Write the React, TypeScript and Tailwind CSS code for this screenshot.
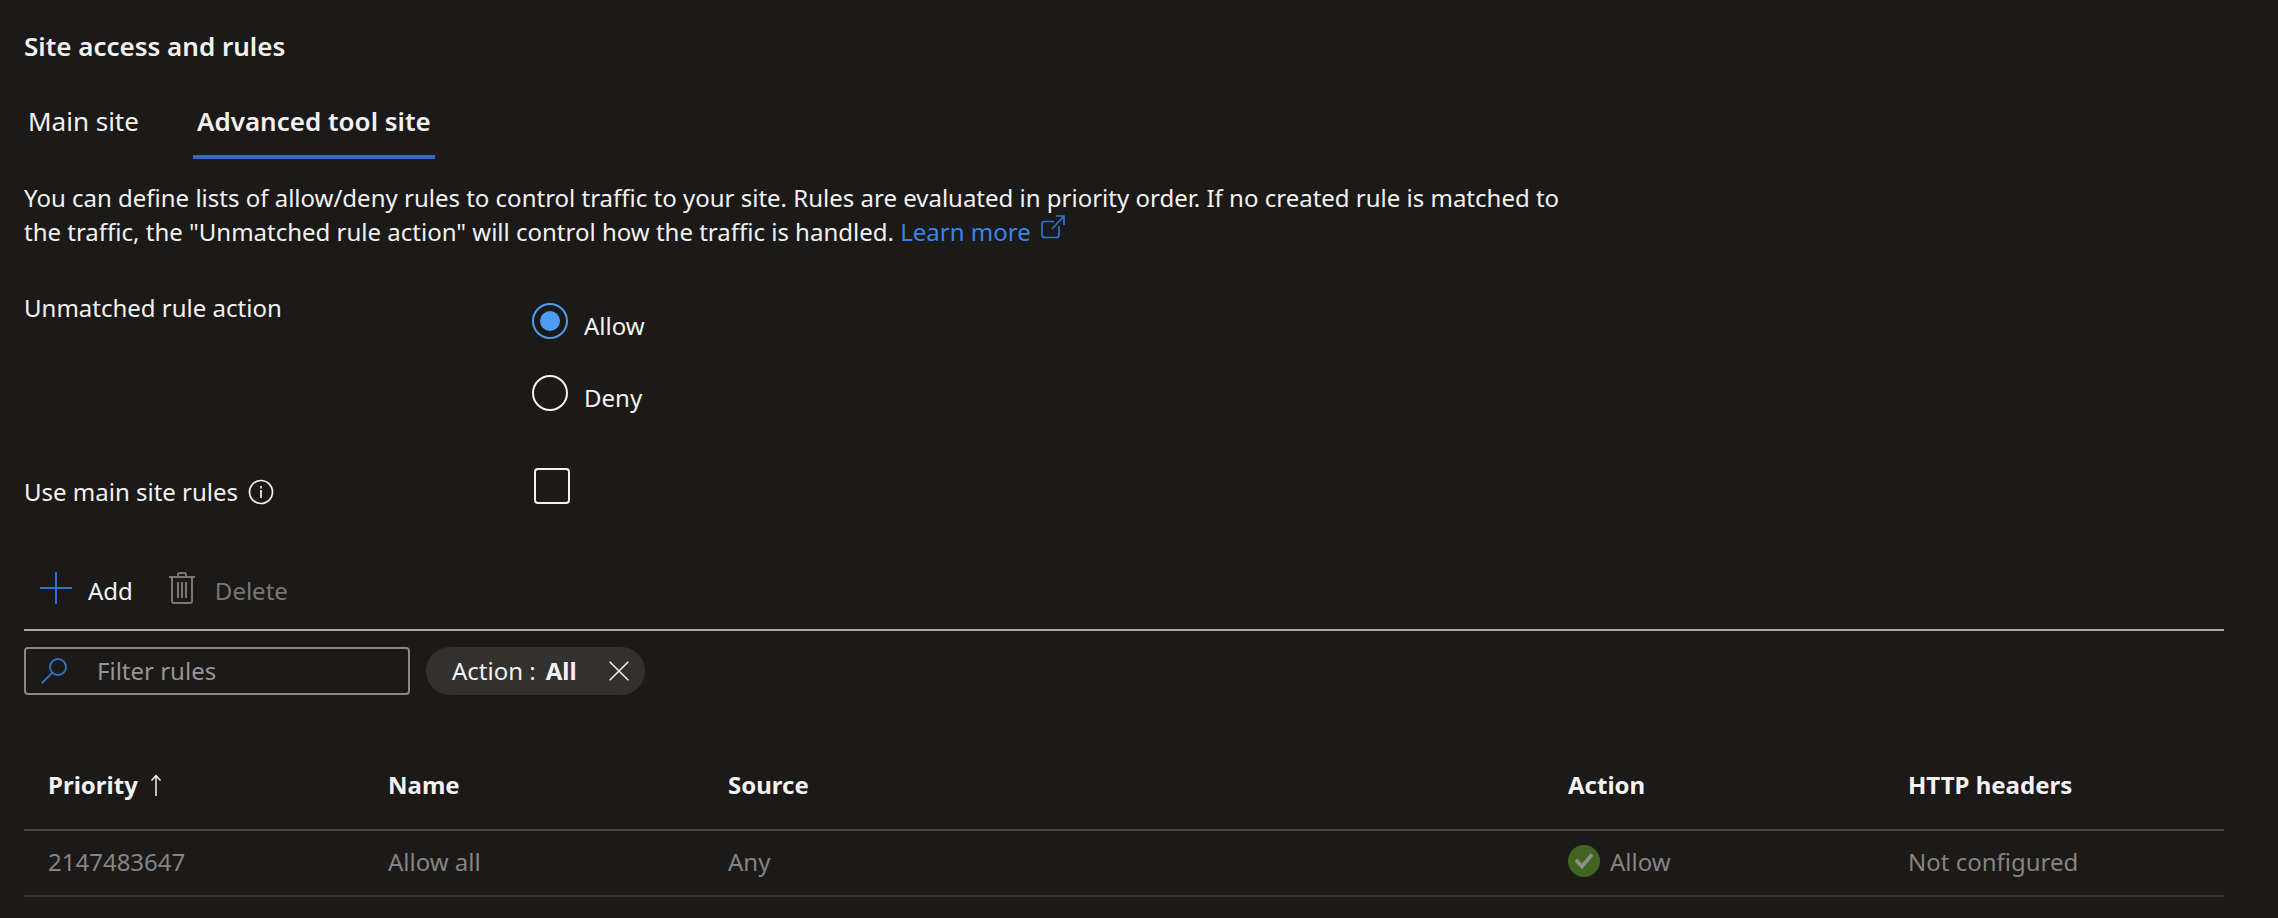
import React, { useState } from "react";

type IconProps = { className?: string };

const ExternalLinkIcon = ({ className }: IconProps) => (
  <svg viewBox="0 0 24 24" fill="none" stroke="currentColor" strokeWidth="1.700" className={className} aria-hidden="true">
    <path d="M13 6.500H3.500Q1 6.500 1 9v11q0 2.500 2.500 2.500h12Q18 22.500 18 20V11" />
    <path d="M11 14 23 1M15 1h8v9" />
  </svg>
);

const InfoIcon = ({ className }: IconProps) => (
  <svg viewBox="0 0 26 26" fill="none" stroke="currentColor" strokeWidth="1.700" className={className} aria-hidden="true">
    <circle cx="13" cy="13" r="11.500" />
    <path d="M13 11v8M13 7v2.400" />
  </svg>
);

const PlusIcon = ({ className }: IconProps) => (
  <svg viewBox="0 0 32 32" fill="none" stroke="currentColor" strokeWidth="2" className={className} aria-hidden="true">
    <path d="M16 0v32M0 16h32" />
  </svg>
);

const TrashIcon = ({ className }: IconProps) => (
  <svg viewBox="0 0 26 32" fill="none" stroke="currentColor" strokeWidth="2" className={className} aria-hidden="true">
    <path d="M0 5h26M9 5V2.500Q9 1 10.500 1h5Q17 1 17 2.500V5M3 5v24Q3 31 5 31h16q2 0 2-2V5" />
    <path d="M9 10v16M13 10v16M17 10v16" />
  </svg>
);

const SearchIcon = ({ className }: IconProps) => (
  <svg viewBox="0 0 26 26" fill="none" stroke="currentColor" strokeWidth="1.800" className={className} aria-hidden="true">
    <circle cx="17" cy="9" r="8" />
    <path d="M11.300 14.700 .7 25.300" />
  </svg>
);

const CloseIcon = ({ className }: IconProps) => (
  <svg viewBox="0 0 20 20" fill="none" stroke="currentColor" strokeWidth="1.500" className={className} aria-hidden="true">
    <path d="M.7.7 19.300 19.300M19.300.7.7 19.300" />
  </svg>
);

const SortUpIcon = ({ className }: IconProps) => (
  <svg viewBox="0 0 12 22" fill="none" stroke="currentColor" strokeWidth="1.500" className={className} aria-hidden="true">
    <path d="M6 22V1.500M1.500 6.500l4.500-5L10.500 6.500" />
  </svg>
);

const AllowedIcon = ({ className }: IconProps) => (
  <svg viewBox="0 0 32 32" className={className} aria-hidden="true">
    <circle cx="16" cy="16" r="16" fill="#426422" />
    <path d="M8 15 14 21.500 24 9.500" fill="none" stroke="#8f8f8c" strokeWidth="3.600" />
  </svg>
);

const actions = ["Allow", "Deny"];

const rules = [
  { priority: "2147483647", name: "Allow all", source: "Any", action: "Allow", headers: "Not configured" },
];

export default function App() {
  const [action, setAction] = useState("Allow");
  const cell = "px-6 text-left align-middle";

  return (
    <main className="min-h-screen bg-[#1b1a19] pt-[26px] pr-[54px] pb-5 pl-6 font-['Noto_Sans','Open_Sans',sans-serif] text-[24px] leading-[34px] text-[#f3f2f1]">
      <h1 className="text-[26px] leading-10 font-semibold">Site access and rules</h1>

      <div role="tablist" className="mt-[30px] flex gap-[50px] text-[26px] leading-[50px]">
        <button type="button" role="tab" aria-selected="false" className="border-b-4 border-transparent px-1 pb-[9px]">
          Main site
        </button>
        <button type="button" role="tab" aria-selected="true" className="border-b-4 border-[#326cbc] px-1 pb-[9px] font-semibold">
          Advanced tool site
        </button>
      </div>

      <p className="mt-[22px] max-w-[1570px]">
        You can define lists of allow/deny rules to control traffic to your site. Rules are evaluated in priority order.
        If no created rule is matched to the traffic, the "Unmatched rule action" will control how the traffic is
        handled.{" "}
        <a href="#learn-more" className="inline-flex gap-2.5 align-bottom text-[#3a84e6]">
          Learn more <ExternalLinkIcon className="size-6 text-[#2f74cc]" />
        </a>
      </p>

      <div role="radiogroup" aria-labelledby="unmatched" className="mt-[42px] flex">
        <div id="unmatched" className="w-[508px]">Unmatched rule action</div>
        <div className="flex flex-col gap-8 pt-3">
          {actions.map((name) => (
            <label key={name} className="flex h-10 items-start gap-4">
              <input
                type="radio"
                name="unmatched-action"
                checked={action === name}
                onChange={() => setAction(name)}
                className="size-9 appearance-none rounded-full border-2 border-[#f3f2f1] bg-clip-content p-1.5 checked:border-[#4f9bf2] checked:bg-[#4f9bf2]"
              />
              <span className="pt-1.5">{name}</span>
            </label>
          ))}
        </div>
      </div>

      <div className="mt-12 flex items-start">
        <div className="flex w-[510px] items-center gap-2.5 pt-3">
          <label htmlFor="use-main">Use main site rules</label>
          <InfoIcon className="size-[26px]" />
        </div>
        <input id="use-main" type="checkbox" className="mt-[5px] size-9 appearance-none rounded-[4px] border-2 border-[#f3f2f1]" />
      </div>

      <div className="mt-14 flex h-[66px] items-start gap-9 border-b-2 border-[#a9a8a6] pt-[7px] pl-4">
        <button type="button" className="flex gap-4">
          <PlusIcon className="size-8 text-[#2f74cc]" />
          <span className="pt-0.5">Add</span>
        </button>
        <button type="button" disabled className="flex gap-5 text-[#797775]">
          <TrashIcon className="h-8 w-[26px]" />
          <span className="pt-0.5">Delete</span>
        </button>
      </div>

      <div className="mt-4 flex gap-4">
        <div className="flex h-12 w-[386px] items-center gap-[30px] rounded-[4px] border-2 border-[#8a8886] pl-[15px]">
          <SearchIcon className="size-[26px] shrink-0 text-[#2f74cc]" />
          <input
            type="text"
            aria-label="Filter rules"
            placeholder="Filter rules"
            className="w-full min-w-0 bg-transparent outline-none placeholder:text-[#979593]"
          />
        </div>
        <div className="flex h-12 items-center gap-8 rounded-full bg-[#323130] pr-4 pl-[26px]">
          <span className="flex gap-2.5">
            <span>Action :</span>
            <b>All</b>
          </span>
          <button type="button" aria-label="Remove filter">
            <CloseIcon className="size-5" />
          </button>
        </div>
      </div>

      <table className="mt-[62px] w-full table-fixed border-collapse">
        <thead>
          <tr className="h-[73px] border-b-2 border-[#454443] [&>th]:pb-4 [&>th]:font-bold">
            <th scope="col" aria-sort="ascending" className={`${cell} w-[340px]`}>
              <span className="flex items-center gap-3">
                Priority
                <SortUpIcon className="h-[22px] w-3" />
              </span>
            </th>
            <th scope="col" className={`${cell} w-[340px]`}>Name</th>
            <th scope="col" className={cell}>Source</th>
            <th scope="col" className={`${cell} w-[340px]`}>Action</th>
            <th scope="col" className={`${cell} w-[340px]`}>HTTP headers</th>
          </tr>
        </thead>
        <tbody>
          {rules.map((rule) => (
            <tr key={rule.priority} className="h-[66px] border-b-2 border-[#3b3a39] text-[#868482] [&>td]:pb-0.5">
              <td className={cell}>{rule.priority}</td>
              <td className={cell}>{rule.name}</td>
              <td className={cell}>{rule.source}</td>
              <td className={cell}>
                <span className="flex items-start gap-2.5">
                  <AllowedIcon className="size-8" />
                  {rule.action}
                </span>
              </td>
              <td className={cell}>{rule.headers}</td>
            </tr>
          ))}
        </tbody>
      </table>
    </main>
  );
}
